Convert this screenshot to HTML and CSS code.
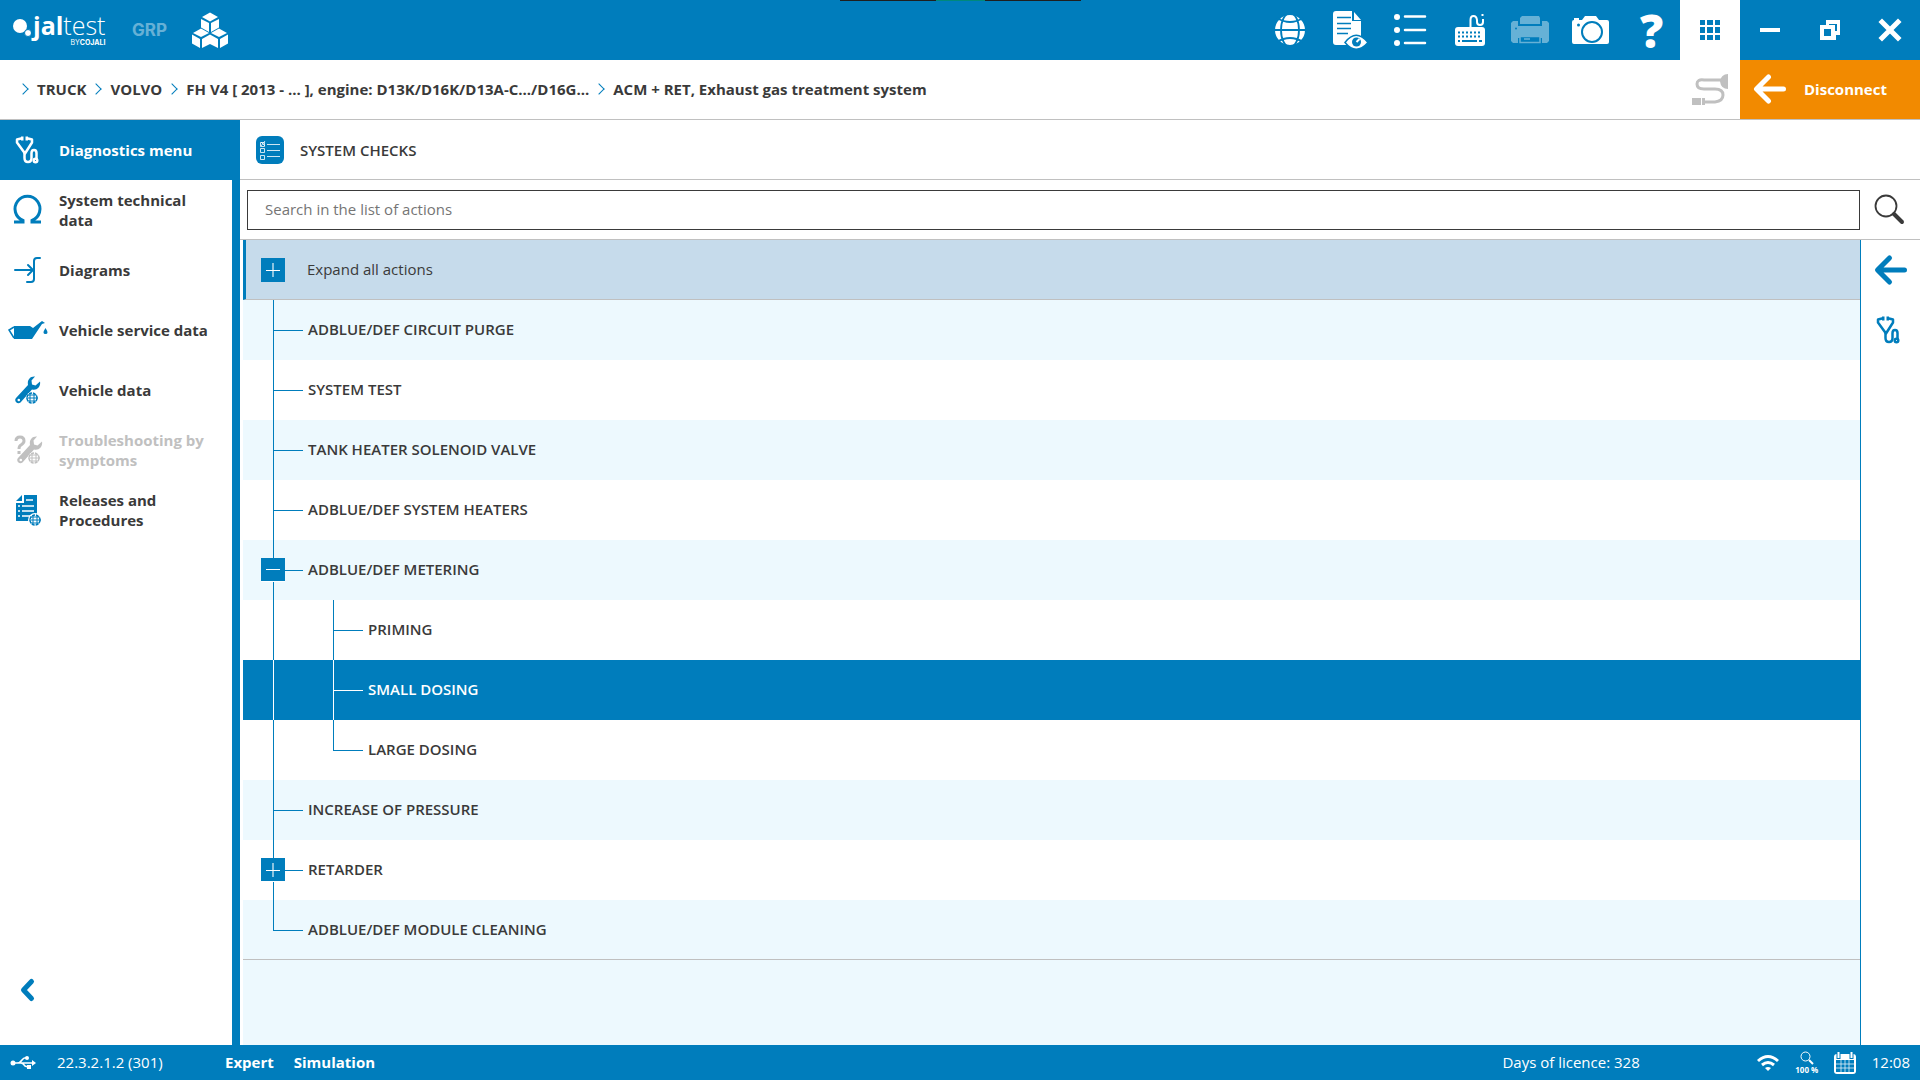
FILE: index.html
```html
<!DOCTYPE html>
<html lang="en">
<head>
    <meta charset="UTF-8">
    <meta name="viewport" content="width=device-width, initial-scale=1">
    <title>Jaltest - System checks</title>
    <link rel="stylesheet" href="styles.css">
</head>
<body>
    <!-- Shared icons -->
    <svg class="sprite" aria-hidden="true">
        <symbol id="stethoscope" viewBox="0 0 60 60">
            <g fill="none" stroke="currentColor" stroke-width="2.500" stroke-linecap="round" stroke-linejoin="round">
                <path d="M21 18.500l-4 1v3l8 11 7-11v-3l-4-1" />
                <path d="M21 18.500h2.500M25.500 18.500h2.500" stroke-width="4" stroke-linecap="butt" />
                <path d="M24.500 33v5q0 4 3.500 4t3.500-4v-5q0-3 2.500-3t2.500 3v6" />
                <circle cx="35.500" cy="40.500" r="1.800" />
            </g>
        </symbol>
        <symbol id="globe-small" viewBox="0 0 12 12">
            <circle cx="6" cy="6" r="5" fill="none" stroke="currentColor" stroke-width="1.500" stroke-dasharray="3 1" />
            <path d="M0 6h12M1.500 3h9M1.500 9h9M4 1v10M8 1v10" fill="none" stroke="currentColor" />
        </symbol>
        <symbol id="wrench" viewBox="0 0 26 28">
            <path d="M20 0.500C15 0 12 4 13 9L1 22c-2.500 3 1.500 7 4.500 4.500L17 13.500c5 1.500 9-3 8-8l-4.500 4-3.500-1-.500-4z" fill="currentColor" />
            <circle cx="3.800" cy="24" r="1.300" fill="#fff" />
        </symbol>
        <symbol id="arrow" viewBox="0 0 60 60">
            <path d="M43.500 30H17M28.500 18L16.500 30l12 12" fill="none" stroke="currentColor" stroke-width="5" stroke-linecap="round" stroke-linejoin="round" />
        </symbol>
        <symbol id="plus" viewBox="0 0 24 24">
            <path d="M5 12.500h14" stroke="#fff" />
            <path d="M12 5v14" stroke="#fff" stroke-width="2" opacity=".55" />
        </symbol>
        <symbol id="minus" viewBox="0 0 24 24">
            <path d="M5 11.500h14" stroke="#fff" />
        </symbol>
    </svg>

    <div class="top-marker"></div>

    <header class="topbar">
        <a class="logo" href="#" aria-label="Jaltest by Cojali">
            <svg width="18" height="20" viewBox="0 0 18 20"><circle cx="7" cy="7" r="7" fill="#fff" /><circle cx="15" cy="14" r="3.500" fill="#fff" stroke="#007dbc" /></svg>
            <span class="logo-text">
                <span class="logo-name"><b>jal</b>test</span>
                <span class="logo-by">BY<b>COJALI</b></span>
            </span>
        </a>
        <span class="grp">GRP</span>
        <button class="tool" aria-label="Modules">
            <svg viewBox="0 0 60 60" fill="#fff">
                <path d="M30 12.500l8 4.500-8 4.500-8-4.500zM21 19l8 4v9l-8-4.500zM39 19l-8 4v9l8-4.500z" />
                <path d="M21 28.500l8 4.500-8 4-8-4zM12 34.500l8 4.500v9l-8-4.500zM30 34.500L22 39v9l8-4z" />
                <path d="M39 28.500l8 4.500-8 4-8-4zM30 34.500l8 4.500v9l-8-4zM48 34.500L40 39v9l8-4.500z" />
            </svg>
        </button>

        <nav class="tools" aria-label="Tools">
            <button class="tool" aria-label="Language">
                <svg viewBox="0 0 60 60">
                    <circle cx="30" cy="30" r="15" fill="#fff" />
                    <g fill="none" stroke="#007dbc" stroke-width="1.800">
                        <ellipse cx="30" cy="30" rx="9" ry="17" />
                        <path d="M14 30h32M17 18q13 8 26 0M17 42q13-8 26 0" />
                    </g>
                </svg>
            </button>
            <button class="tool" aria-label="Report preview">
                <svg viewBox="0 0 60 60">
                    <path d="M16 11h16v10h9v21q0 3-3 3H16q-3 0-3-3V14q0-3 3-3z" fill="#fff" />
                    <path d="M34 12l7 8h-7z" fill="#fff" />
                    <path d="M17 17.500h14M17 23.500h14M17 28.500h14M17 33.500h11" stroke="#007dbc" stroke-width="1.500" />
                    <path d="M25 42.500Q36 28 48 42.500 36 56 25 42.500z" fill="#fff" stroke="#007dbc" stroke-width="1.500" />
                    <circle cx="36.500" cy="42" r="4.500" fill="#007dbc" />
                    <path d="M36.500 42l3-3" stroke="#fff" stroke-width="2" />
                </svg>
            </button>
            <button class="tool" aria-label="List">
                <svg viewBox="0 0 60 60" fill="#fff">
                    <circle cx="17" cy="17" r="3" /><circle cx="17" cy="30" r="3" /><circle cx="17" cy="43" r="3" />
                    <path d="M25 16.500h20M25 30h20M25 43h20" stroke="#fff" stroke-width="2.500" stroke-linecap="round" />
                </svg>
            </button>
            <button class="tool" aria-label="Keyboard">
                <svg viewBox="0 0 60 60">
                    <rect x="15" y="27" width="30" height="19" rx="3" fill="#fff" />
                    <path d="M30.500 27v-7q0-4 3-4t3.500 4v2q0 3 3 3t3-3v-3M42.500 14v2" fill="none" stroke="#fff" stroke-width="2" />
                    <path d="M18 32.500h24M18 36.500h24" stroke="#007dbc" stroke-width="2" stroke-dasharray="2 2" />
                    <path d="M18 41h2M22 41h15M39 41h3" stroke="#007dbc" stroke-width="2" />
                </svg>
            </button>
            <button class="tool" aria-label="Print" disabled>
                <svg viewBox="0 0 60 60" opacity=".4">
                    <path d="M22 16h17l1 2v6H20v-6z" fill="#fff" />
                    <path d="M13 21h5v5h24v-5h5l2 2v18l-2 2h-5v-5H18v5h-5l-2-2V23z" fill="#fff" />
                    <path d="M20 36.500h20v6H20z" fill="#007dbc" stroke="#fff" stroke-width="1.500" />
                    <path d="M24 39h6" stroke="#fff" stroke-width="1.500" />
                    <circle cx="16" cy="28.500" r="1" fill="#007dbc" />
                </svg>
            </button>
            <button class="tool" aria-label="Screenshot">
                <svg viewBox="0 0 60 60">
                    <path d="M14 20v-2h5v2h3l3-4h11l3 4h8q2 0 2 2v20q0 2-2 2H14q-2 0-2-2V22q0-2 2-2z" fill="#fff" />
                    <circle cx="32" cy="32" r="10" fill="none" stroke="#007dbc" stroke-width="2" />
                    <circle cx="18.500" cy="25" r="1.500" fill="#007dbc" />
                </svg>
            </button>
            <button class="tool help">?</button>
            <button class="tool active" aria-label="Applications">
                <svg viewBox="0 0 60 60" fill="#007dbc">
                    <path d="M20 20h5v5h-5zM27 20h6v5h-6zM35 20h5v5h-5zM20 27h5v6h-5zM27 27h6v6h-6zM35 27h5v6h-5zM20 35h5v5h-5zM27 35h6v5h-6zM35 35h5v5h-5z" />
                </svg>
            </button>
            <button class="tool" aria-label="Minimize">
                <svg viewBox="0 0 60 60"><path d="M20 30h20" stroke="#fff" stroke-width="4" /></svg>
            </button>
            <button class="tool" aria-label="Restore">
                <svg viewBox="0 0 60 60">
                    <path d="M26 20h14v15h-4v-4h1v-7h-8v1h-3z" fill="#fff" />
                    <path d="M20 25h16v15H20zM24 29v7h7v-7z" fill="#fff" fill-rule="evenodd" />
                    <path d="M29 24.500h6.500V31" fill="none" stroke="#007dbc" />
                </svg>
            </button>
            <button class="tool" aria-label="Close">
                <svg viewBox="0 0 60 60"><path d="M22 22l16 16M38 22L22 38" stroke="#fff" stroke-width="5" stroke-linecap="square" /></svg>
            </button>
        </nav>
    </header>

    <div class="pathbar">
        <nav class="breadcrumbs" aria-label="Breadcrumb">
            <a href="#">TRUCK</a>
            <a href="#">VOLVO</a>
            <a href="#">FH V4 [ 2013 - ... ], engine: D13K/D16K/D13A-C.../D16G...</a>
            <a href="#">ACM + RET, Exhaust gas treatment system</a>
        </nav>
        <svg class="cable" viewBox="0 0 60 60" role="img" aria-label="Cable">
            <path d="M24 42h11q8-1 8-7t-8-6H24q-7 0-7-5t7-4h17" fill="none" stroke="#c0c0c0" stroke-width="3" />
            <path d="M48 14v15q-7 0-8-7.500Q41 14 48 14zM12 38h9v7h-9zM22 38h3v7h-3z" fill="#c0c0c0" />
        </svg>
        <button class="disconnect">
            <svg viewBox="0 0 60 60"><use href="#arrow" /></svg>
            Disconnect
        </button>
    </div>

    <div class="content">
        <aside class="sidebar">
            <nav aria-label="Vehicle">
                <a class="menu-item selected" href="#">
                    <svg viewBox="0 0 60 60"><use href="#stethoscope" /></svg>
                    <span>Diagnostics menu</span>
                </a>
                <a class="menu-item" href="#">
                    <svg viewBox="0 0 60 60"><path d="M14 42h9v-1.500a12.500 12.500 0 1 1 9 0V42h9" fill="none" stroke="currentColor" stroke-width="3" /></svg>
                    <span>System technical data</span>
                </a>
                <a class="menu-item" href="#">
                    <svg viewBox="0 0 60 60"><path d="M15 30h16M28 25l5 5-5 5M40 18h-3q-3 0-3 3v18q0 3-3 3h-4" fill="none" stroke="currentColor" stroke-width="2" stroke-linecap="round" /></svg>
                    <span>Diagrams</span>
                </a>
                <a class="menu-item" href="#">
                    <svg viewBox="0 0 60 60">
                        <path d="M14 26h16l3 2 9-7 3 2-3 1-10 15H14z" fill="currentColor" />
                        <path d="M14 27l-5 3 5 8" fill="none" stroke="currentColor" stroke-width="1.500" />
                        <path d="M45.500 28q4 6 0 6t0-6z" fill="currentColor" />
                    </svg>
                    <span>Vehicle service data</span>
                </a>
                <a class="menu-item" href="#">
                    <svg viewBox="0 0 60 60"><use href="#wrench" x="15" y="16" width="26" height="28" /><circle cx="32" cy="38" r="6" fill="#fff" /><use href="#globe-small" x="26" y="32" width="12" height="12" /></svg>
                    <span>Vehicle data</span>
                </a>
                <a class="menu-item disabled" href="#" aria-disabled="true">
                    <svg viewBox="0 0 60 60">
                        <path d="M16 21q0-4 4-4t4 4q0 2-3 4-2 1-2 4M19 31v3" fill="none" stroke="currentColor" stroke-width="3" />
                        <use href="#wrench" x="17" y="16" width="26" height="28" /><circle cx="34" cy="38" r="6" fill="#fff" /><use href="#globe-small" x="28" y="32" width="12" height="12" />
                    </svg>
                    <span>Troubleshooting by symptoms</span>
                </a>
                <a class="menu-item" href="#">
                    <svg viewBox="0 0 60 60">
                        <path d="M24 15h13v26H16V23h8zM22 15v6h-6z" fill="currentColor" />
                        <path d="M26 20h7M22 26h12M22 31h12M22 36h8M18 26h2M18 31h2M18 36h2" stroke="#fff" stroke-width="1.500" />
                        <circle cx="35" cy="40" r="7" fill="#fff" />
                        <use href="#globe-small" x="29" y="34" width="12" height="12" />
                    </svg>
                    <span>Releases and Procedures</span>
                </a>
            </nav>
            <button class="collapse" aria-label="Collapse menu">
                <svg viewBox="0 0 60 60"><path d="M31.500 21.500L23.500 30l8 8.500" fill="none" stroke="currentColor" stroke-width="5" stroke-linecap="round" stroke-linejoin="round" /></svg>
            </button>
        </aside>

        <main class="main">
            <div class="title-row">
                <svg viewBox="0 0 28 28">
                    <rect width="28" height="28" rx="6" fill="#007dbc" />
                    <path d="M4.500 6.500h4v4h-4zM4.500 12.500h4v4h-4zM4.500 19.500h4v4h-4zM11 8.500h13M11 14.500h13M11 20.500h13M5 6l4 4M9 5L5 10" fill="none" stroke="#fff" stroke-opacity=".8" />
                </svg>
                <h1>SYSTEM CHECKS</h1>
            </div>
            <form class="search-row">
                <input type="text" aria-label="Search in the list of actions" placeholder="Search in the list of actions">
                <button type="button" aria-label="Search">
                    <svg viewBox="0 0 60 60" fill="none" stroke="#3a3a3a"><circle cx="26" cy="26" r="10.500" stroke-width="1.800" /><path d="M34 34l8 8" stroke-width="4" stroke-linecap="round" /></svg>
                </button>
            </form>
            <div class="work">
                <div class="actions">
                    <div class="expand-all">
                        <button class="toggle" aria-labelledby="expandLabel"><svg viewBox="0 0 24 24"><use href="#plus" /></svg></button>
                        <span id="expandLabel">Expand all actions</span>
                    </div>
                    <ul class="tree">
                        <li><span class="guide branch"></span><a href="#">ADBLUE/DEF CIRCUIT PURGE</a></li>
                        <li><span class="guide branch"></span><a href="#">SYSTEM TEST</a></li>
                        <li><span class="guide branch"></span><a href="#">TANK HEATER SOLENOID VALVE</a></li>
                        <li><span class="guide branch"></span><a href="#">ADBLUE/DEF SYSTEM HEATERS</a></li>
                        <li><span class="guide branch"><button class="toggle" aria-label="Collapse"><svg viewBox="0 0 24 24"><use href="#minus" /></svg></button></span><a href="#">ADBLUE/DEF METERING</a></li>
                        <li><span class="guide"></span><span class="guide branch"></span><a href="#">PRIMING</a></li>
                        <li class="selected"><span class="guide"></span><span class="guide branch"></span><a href="#">SMALL DOSING</a></li>
                        <li><span class="guide"></span><span class="guide branch last"></span><a href="#">LARGE DOSING</a></li>
                        <li><span class="guide branch"></span><a href="#">INCREASE OF PRESSURE</a></li>
                        <li><span class="guide branch"><button class="toggle" aria-label="Expand"><svg viewBox="0 0 24 24"><use href="#plus" /></svg></button></span><a href="#">RETARDER</a></li>
                        <li><span class="guide branch last"></span><a href="#">ADBLUE/DEF MODULE CLEANING</a></li>
                    </ul>
                </div>
                <div class="side-tools">
                    <button class="tool" aria-label="Back"><svg viewBox="0 0 60 60"><use href="#arrow" /></svg></button>
                    <button class="tool" aria-label="Diagnostics"><svg viewBox="0 0 60 60"><use href="#stethoscope" /></svg></button>
                </div>
            </div>
        </main>
    </div>

    <footer class="statusbar">
        <svg class="usb" viewBox="0 0 26 14" fill="none" stroke="#fff" stroke-width="1.500">
            <circle cx="3" cy="7" r="2.500" fill="#fff" stroke="none" />
            <path d="M3 7h20M7 7q3 0 5-3t5-2M11 7q2 0 4 3l3 1" />
            <path d="M22 4l4 3-4 3z" fill="#fff" stroke="none" /><circle cx="17" cy="2" r="2" fill="#fff" stroke="none" /><path d="M17 9h4v4h-4z" fill="#fff" stroke="none" />
        </svg>
        <span class="version">22.3.2.1.2 (301)</span>
        <b>Expert</b>
        <b>Simulation</b>
        <span class="licence">Days of licence: 328</span>
        <svg class="wifi" viewBox="0 0 24 18" fill="none" stroke="#fff" stroke-width="3">
            <path d="M2 7q10-9 20 0M6 11q6-5 12 0" /><path d="M12 17l-3-3q3-2 6 0z" fill="#fff" stroke="none" />
        </svg>
        <button class="zoom">
            <svg viewBox="0 0 14 14" fill="none" stroke="#fff"><circle cx="5.500" cy="5.500" r="4.500" /><path d="M9 9l4 4" stroke-width="2" /></svg>
            100 %
        </button>
        <svg class="calendar" viewBox="0 0 22 22">
            <rect y="2" width="22" height="20" rx="3" fill="#fff" />
            <path d="M2 8h18v12H2z" fill="#007dbc" />
            <path d="M2 12h18M2 16h18M7 8v12M11 8v12M15 8v12" stroke="#fff" stroke-opacity=".7" />
            <path d="M4.500 0v7M17.500 0v7" stroke="#007dbc" stroke-width="4" /><path d="M4.500 0v6M17.500 0v6" stroke="#fff" stroke-width="2" />
        </svg>
        <time>12:08</time>
    </footer>
</body>
</html>
```
FILE: styles.css
```css
* {
    box-sizing: border-box;
}
body {
    margin: 0;
    min-height: 100vh;
    display: flex;
    flex-direction: column;
    font-family: "Open Sans", "Noto Sans", sans-serif;
    font-size: 15px;
    line-height: 20px;
    color: #3a3a3a;
    background: #fff;
}
a {
    color: inherit;
    text-decoration: none;
}
button {
    padding: 0;
    border: 0;
    background: none;
    color: inherit;
    font: inherit;
    cursor: pointer;
}
svg {
    display: block;
    flex: none;
}
.sprite {
    position: absolute;
    width: 0;
    height: 0;
}
.top-marker {
    position: absolute;
    top: 0;
    left: 50%;
    width: 241px;
    height: 1px;
    margin-left: -120px;
    background: linear-gradient(90deg, #1f1f1f 40%, #00897b 40% 60%, #1f1f1f 60%);
}

/* Top bar */
.topbar {
    display: flex;
    height: 60px;
    background: #007dbc;
    color: #fff;
}
.logo {
    display: flex;
    width: 120px;
    padding: 11px 0 0 13px;
}
.logo svg {
    margin-top: 8px;
}
.logo-text {
    display: flex;
    flex-direction: column;
    align-items: flex-end;
    margin-left: 2px;
}
.logo-name {
    font-size: 25px;
    line-height: 28px;
    font-weight: 300;
}
.logo-name b {
    font-weight: 700;
}
.logo-by {
    font-family: Inter, sans-serif;
    font-size: 7px;
    line-height: 8px;
}
.grp {
    width: 60px;
    padding-left: 12px;
    font-family: Inter, sans-serif;
    font-size: 17px;
    line-height: 60px;
    font-weight: 700;
    opacity: .4;
}
.tools {
    display: flex;
    margin-left: auto;
}
.tool {
    width: 60px;
    height: 60px;
}
.tool.active {
    background: #fff;
}
.help {
    padding-left: 3px;
    font-family: "Open Sans", sans-serif;
    font-size: 46px;
    line-height: 60px;
    font-weight: 800;
}

/* Breadcrumbs */
.pathbar {
    display: flex;
    height: 60px;
    border-bottom: 1px solid #c0c0c0;
}
.breadcrumbs {
    display: flex;
    flex: 1;
    align-items: center;
    gap: 6px;
    padding: 0 0 2px 19px;
    font-weight: 700;
}
.breadcrumbs a {
    display: flex;
    align-items: center;
    white-space: nowrap;
}
.breadcrumbs a::before {
    content: "";
    width: 7px;
    height: 7px;
    margin-right: 10px;
    border: solid #007dbc;
    border-width: 1px 1px 0 0;
    transform: rotate(45deg);
}
.cable {
    width: 60px;
    height: 60px;
}
.disconnect {
    display: flex;
    align-items: center;
    width: 180px;
    padding-bottom: 2px;
    background: #f28a00;
    color: #fff;
    font-weight: 700;
}
.disconnect svg {
    width: 60px;
    height: 60px;
    margin-right: 4px;
}

/* Left menu */
.content {
    display: flex;
    flex: 1;
}
.sidebar {
    display: flex;
    flex-direction: column;
    justify-content: space-between;
    width: 240px;
    border-right: 8px solid #007dbc;
}
.menu-item {
    display: flex;
    align-items: center;
    height: 60px;
    padding-right: 16px;
    font-weight: 700;
}
.menu-item svg {
    width: 60px;
    height: 60px;
    margin-right: -1px;
    color: #007dbc;
}
.menu-item.selected {
    margin-right: -8px;
    background: #007dbc;
    color: #fff;
}
.menu-item.selected svg {
    color: #fff;
}
.menu-item.disabled,
.menu-item.disabled svg {
    color: #c0c0c0;
}
.collapse {
    width: 60px;
    height: 60px;
    margin-bottom: 25px;
    color: #007dbc;
}

/* Main panel */
.main {
    display: flex;
    flex: 1;
    flex-direction: column;
}
.title-row {
    display: flex;
    align-items: center;
    height: 60px;
    padding-left: 16px;
    border-bottom: 1px solid #c0c0c0;
}
.title-row svg {
    width: 28px;
    height: 28px;
}
h1 {
    margin: 0 0 0 16px;
    font-size: 15px;
    font-weight: 600;
}
.search-row {
    display: flex;
    align-items: center;
    height: 60px;
    padding-left: 7px;
    border-bottom: 1px solid #c0c0c0;
}
.search-row input {
    flex: 1;
    height: 40px;
    padding: 0 17px 2px;
    border: 1px solid #3a3a3a;
    font: inherit;
}
.search-row input::placeholder {
    color: #757575;
}
.search-row button {
    width: 60px;
    height: 60px;
}
.work {
    display: flex;
    flex: 1;
}
.actions {
    flex: 1;
    margin-left: 3px;
    background: #edf9fe;
}
.expand-all {
    display: flex;
    align-items: center;
    height: 60px;
    padding-left: 15px;
    background: #c6dbeb;
    border-bottom: 1px solid #c0c0c0;
    border-left: 3px solid #007dbc;
}
.expand-all span {
    margin-left: 22px;
    padding-bottom: 2px;
}
.toggle {
    width: 24px;
    height: 24px;
    background: #007dbc;
}
.toggle svg {
    width: 24px;
    height: 24px;
}
.tree {
    margin: 0;
    padding: 0;
    list-style: none;
    border-bottom: 1px solid #c0c0c0;
}
.tree li {
    display: flex;
    align-items: center;
    height: 60px;
    font-weight: 600;
}
.tree li:last-child {
    height: 59px;
}
.tree li:nth-child(even) {
    background: #fff;
}
.tree li.selected {
    background: #007dbc;
    color: #fff;
}
.tree a {
    margin-left: 5px;
    padding-bottom: 2px;
}

/* Tree lines: a vertical one in every guide, a short horizontal one on branches */
.guide {
    display: grid;
    grid-template: 30px 1fr / 30px 30px;
    align-self: stretch;
    color: #007dbc;
}
.guide::before {
    content: "";
    grid-area: 1 / 2 / 3 / 3;
    border-left: 1px solid;
}
.guide.branch::after {
    content: "";
    grid-area: 2 / 2 / 3 / 3;
    border-top: 1px solid;
}
.guide.last::before {
    grid-area: 1 / 2 / 2 / 3;
}
.guide .toggle {
    grid-area: 1 / 1 / 3 / 3;
    z-index: 1;
    height: 23px;
    margin: 18px;
    overflow: hidden;
    box-shadow: 0 1px #fff;
}
.selected .guide {
    color: #fff;
}
.side-tools {
    display: flex;
    flex-direction: column;
    width: 60px;
    border-left: 1px solid #007dbc;
    color: #007dbc;
}

/* Status bar */
.statusbar {
    display: flex;
    align-items: center;
    height: 35px;
    padding: 0 10px;
    background: #007dbc;
    color: #fff;
}
.statusbar span,
.statusbar b,
.statusbar time {
    padding-bottom: 2px;
}
.statusbar b {
    margin-right: 20px;
}
.usb {
    width: 26px;
    height: 14px;
}
.version {
    width: 168px;
    margin-left: 21px;
}
.licence {
    margin-left: auto;
}
.wifi {
    width: 24px;
    height: 18px;
    margin-left: 116px;
}
.zoom {
    width: 26px;
    margin: 0 14px;
    font-size: 8px;
    line-height: 10px;
    font-weight: 700;
    white-space: nowrap;
}
.zoom svg {
    width: 14px;
    height: 14px;
    margin: 0 auto;
}
.calendar {
    width: 22px;
    height: 22px;
    margin-right: 16px;
}
```
